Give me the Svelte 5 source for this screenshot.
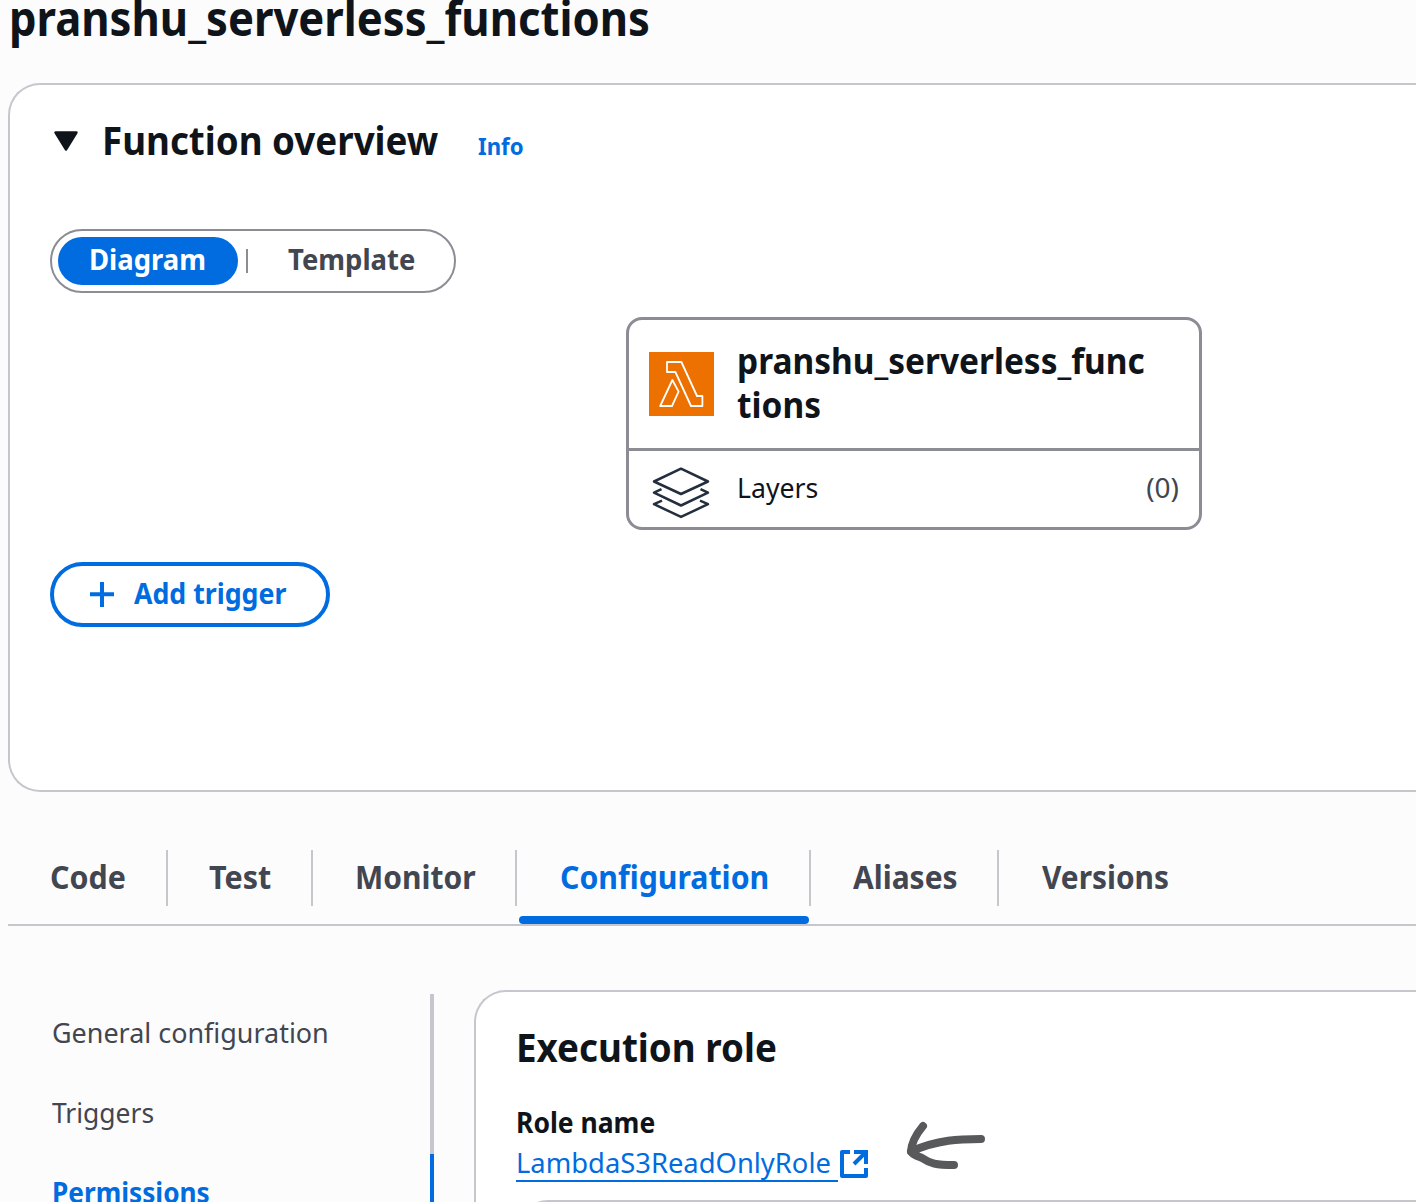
<script>
  const tabs = [
    { id: 'code', label: 'Code' },
    { id: 'test', label: 'Test' },
    { id: 'monitor', label: 'Monitor' },
    { id: 'configuration', label: 'Configuration' },
    { id: 'aliases', label: 'Aliases' },
    { id: 'versions', label: 'Versions' }
  ];
  const sections = [
    { id: 'general', label: 'General configuration' },
    { id: 'triggers', label: 'Triggers' },
    { id: 'permissions', label: 'Permissions' }
  ];
  let activeTab = $state('configuration');
  let activeSection = $state('permissions');
</script>

<div class="page">
  <h1><span class="t t-title">pranshu_serverless_functions</span></h1>

  <section class="overview">
    <header>
      <svg class="caret" width="24" height="20" viewBox="0 0 24 20">
        <path d="M1.5 1.5h21L12 18.5z" fill="#0f141a" stroke="#0f141a" stroke-width="2.4" stroke-linejoin="round" />
      </svg>
      <h2><span class="t t-heading">Function overview</span></h2>
      <a class="info" href="#info"><span class="t t-info">Info</span></a>
    </header>

    <div class="segmented">
      <button class="segment selected"><span class="t t-segment">Diagram</span></button>
      <i class="bar"></i>
      <button class="segment plain"><span class="t t-segment">Template</span></button>
    </div>

    <div class="function-card">
      <div class="function-name">
        <svg class="lambda" width="65" height="64" viewBox="0 0 65 64">
          <rect width="65" height="64" fill="#ed7100" />
          <g fill="none" stroke="#fff" stroke-width="1.8" stroke-linejoin="round">
            <path d="M18 10h14.4L48 44h5.4v10H42L26.4 20H18z" />
            <path d="M23.4 28l6.2 11.7L23 54H11.2z" />
          </g>
        </svg>
        <strong class="t t-function">pranshu_serverless_func<br />tions</strong>
      </div>
      <div class="layers">
        <svg width="58" height="52" viewBox="0 0 58 52" fill="none" stroke="#232f3e" stroke-width="2.5" stroke-linejoin="round">
          <path d="M29 1.700L56 14.500 29 27 2 14.500z" />
          <path d="M9.500 22.200L2 25.700 29 38.500l27-12.800-7.500-3.500" />
          <path d="M10 33.700L2 37.200 29 49.900l27-12.700-8-3.500" />
        </svg>
        <span class="t t-layers">Layers</span>
        <span class="count">(0)</span>
      </div>
    </div>

    <button class="add">
      <svg width="24" height="25" viewBox="0 0 24 25" stroke="#006ce0" stroke-width="4">
        <path d="M12 0v25M0 12.2h24" />
      </svg>
      <span class="t t-add">Add trigger</span>
    </button>
  </section>

  <nav class="tabs">
    {#each tabs as tab (tab.id)}
      <button class="tab {tab.id}" class:active={activeTab === tab.id} onclick={() => (activeTab = tab.id)}>
        <span class="t">{tab.label}</span>
      </button>
    {/each}
  </nav>

  <div class="body">
    <ul class="side">
      {#each sections as section (section.id)}
        <li class={section.id} class:current={activeSection === section.id}>
          <button onclick={() => (activeSection = section.id)}><span class="t">{section.label}</span></button>
        </li>
      {/each}
    </ul>

    <section class="role">
      <h2><span class="t t-role">Execution role</span></h2>
      <div class="label"><span class="t t-label">Role name</span></div>
      <a class="link" href="#role">
        <span class="link-text"><span class="t t-link">LambdaS3ReadOnlyRole</span></span>
        <svg width="28" height="28" viewBox="0 0 28 28" fill="none" stroke="#006ce0" stroke-width="4">
          <path d="M10 2H2v24h24v-8" stroke-linejoin="round" />
          <path d="M14 2h12v12M25.500 2.500L14 14" />
        </svg>
      </a>
      <div class="policy"></div>
      <svg class="arrow" width="90" height="60" viewBox="0 0 90 60" fill="none" stroke="#58595b" stroke-width="8" stroke-linecap="round" stroke-linejoin="round">
        <path d="M23 11C15.500 20 11.500 27 11 36.500" />
        <path d="M81 24C60 24 38 24.500 11 36.500C13 40 17 41 22 43C30 48.500 36 50 54 50" />
      </svg>
    </section>
  </div>
</div>

<style>
  :global(body) {
    background: #fcfcfd;
    overflow: hidden;
  }
  .page {
    width: 1416px;
    height: 1202px;
    overflow: hidden;
    background: #fcfcfd;
    color: #0f141a;
    font-family: 'Noto Sans', 'Open Sans', sans-serif;
    font-size: 28px;
  }
  h1, h2, ul { margin: 0; padding: 0; }
  button {
    margin: 0;
    padding: 0;
    border: 0;
    background: none;
    font: inherit;
    color: inherit;
    text-align: left;
  }
  svg { display: block; flex: none; }

  /* Labels are condensed slightly from their left edge. */
  .t {
    display: inline-block;
    white-space: nowrap;
    transform: scaleX(var(--sx, 1));
    transform-origin: 0 0;
  }
  .t-title { --sx: 0.908; }
  .t-heading { --sx: 0.918; }
  .t-info { --sx: 0.925; }
  .t-segment { --sx: 0.98; }
  .t-function { --sx: 0.929; }
  .t-layers { --sx: 0.952; }
  .t-add { --sx: 0.954; }
  .t-role { --sx: 0.919; }
  .t-label { --sx: 0.946; }
  .t-link { --sx: 0.977; }

  h1 {
    height: 83px;
    padding-left: 9px;
    font-size: 48px;
    line-height: 36px;
  }
  .overview {
    box-sizing: border-box;
    height: 709px;
    margin-left: 8px;
    padding: 30px 0 0 40px;
    border: 2px solid #c6c6cd;
    border-right: 0;
    border-radius: 32px 0 0 32px;
    background: #fff;
  }
  header {
    display: flex;
    align-items: baseline;
    height: 49px;
    padding-left: 4px;
    line-height: 49px;
  }
  h2 { font-size: 40px; line-height: 49px; }
  header h2 { width: 376px; margin-left: 24px; }
  .caret { align-self: center; margin-top: 3px; }
  .info {
    color: #006ce0;
    font-size: 24px;
    font-weight: 700;
    text-decoration: none;
  }

  .segmented {
    display: flex;
    box-sizing: border-box;
    width: 406px;
    height: 64px;
    margin-top: 65px;
    padding: 6px;
    border: 2px solid #8c8c94;
    border-radius: 32px;
    font-weight: 700;
    line-height: 45px;
  }
  .segment { display: flex; align-items: flex-start; height: 48px; }
  .selected {
    width: 180px;
    padding-left: 31px;
    border-radius: 24px;
    background: #006ce0;
    color: #fff;
    box-sizing: border-box;
  }
  .bar { width: 2px; height: 24px; margin: 12px 40px 0 8px; background: #8c8c94; }
  .plain { color: #424650; }

  .function-card {
    box-sizing: border-box;
    width: 576px;
    height: 213px;
    margin: 24px 0 0 576px;
    border: 3px solid #8c8c94;
    border-radius: 16px;
  }
  .function-name {
    display: flex;
    box-sizing: border-box;
    height: 131px;
    padding: 19px 0 0 20px;
    border-bottom: 3px solid #8c8c94;
  }
  .lambda { margin: 13px 23px 0 0; }
  .function-name strong { font-size: 36px; line-height: 44px; height: 88px; }
  .layers {
    display: flex;
    height: 76px;
    padding: 0 20px 0 23px;
    line-height: 73px;
  }
  .layers svg { margin: 16px 27px 0 0; }
  .count { margin-left: auto; color: #424650; }

  .add {
    display: flex;
    box-sizing: border-box;
    width: 280px;
    height: 65px;
    margin-top: 32px;
    padding-left: 36px;
    border: 4px solid #006ce0;
    border-radius: 33px;
    color: #006ce0;
    font-weight: 700;
    line-height: 54px;
  }
  .add svg { margin: 16px 20px 0 0; }

  .tabs {
    display: flex;
    height: 74px;
    margin: 58px 0 0 8px;
    border-bottom: 2px solid #c6c6cd;
  }
  .tab {
    position: relative;
    display: flex;
    align-items: flex-start;
    box-sizing: border-box;
    height: 56px;
    padding-left: 42px;
    border-right: 2px solid #c6c6cd;
    color: #424650;
    font-size: 32px;
    font-weight: 700;
    line-height: 54px;
  }
  .tab.active { color: #006ce0; }
  .tab.active::after {
    content: '';
    position: absolute;
    left: 2px;
    right: 0;
    top: 66px;
    height: 8px;
    border-radius: 4px;
    background: #006ce0;
  }
  .code { width: 160px; --sx: 0.949; }
  .test { width: 145px; padding-left: 41px; --sx: 0.953; }
  .monitor { width: 204px; --sx: 0.937; }
  .tab.configuration { width: 294px; padding-left: 43px; --sx: 0.945; }
  .aliases { width: 188px; --sx: 0.937; }
  .versions { border-right: 0; padding-left: 43px; --sx: 0.933; }

  .body { display: flex; align-items: flex-start; padding-top: 64px; }
  .side {
    width: 434px;
    margin-top: 4px;
    list-style: none;
    color: #424650;
    line-height: 77px;
  }
  .side li {
    box-sizing: border-box;
    height: 80px;
    padding-left: 52px;
    border-right: 4px solid #c6c6cd;
  }
  .side li button { display: flex; height: 80px; align-items: flex-start; }
  .side .current { border-color: #006ce0; color: #006ce0; font-weight: 700; }
  .general { --sx: 0.9615; }
  .triggers { --sx: 0.944; }
  .permissions { --sx: 0.936; }

  .role {
    position: relative;
    flex: 1;
    height: 260px;
    margin-left: 40px;
    padding: 30px 0 0 40px;
    border: 2px solid #c6c6cd;
    border-right: 0;
    border-radius: 32px 0 0 0;
    background: #fff;
  }
  .label { margin-top: 31px; font-weight: 700; line-height: 41px; height: 40px; }
  .link { display: flex; height: 40px; color: #006ce0; line-height: 40px; text-decoration: none; }
  .link-text {
    box-sizing: border-box;
    width: 322px;
    height: 40px;
    border-bottom: 2px solid #006ce0;
  }
  .link svg { margin: 8px 0 0 2px; }
  .policy {
    height: 60px;
    margin-top: 18px;
    border: 2px solid #c6c6cd;
    border-right: 0;
    border-radius: 32px 0 0 0;
  }
  .arrow { position: absolute; left: 424px; top: 123px; }
</style>
